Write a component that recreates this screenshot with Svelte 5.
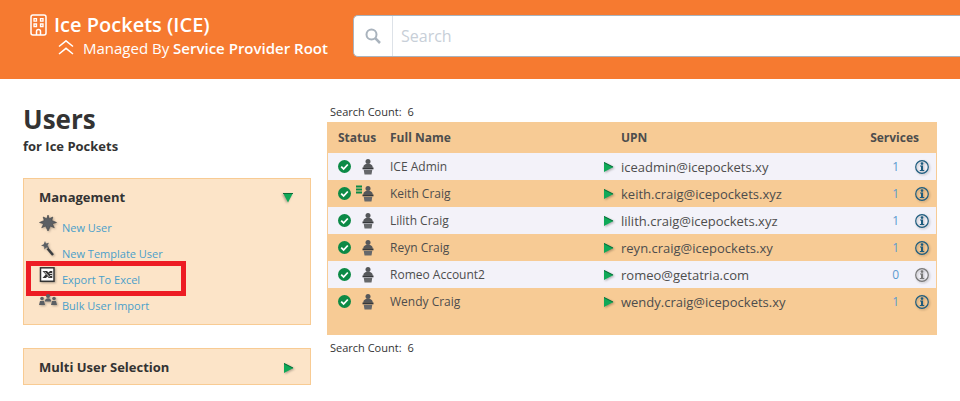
<script lang="ts">
  type User = {
    name: string
    upn: string
    services: number
    template?: boolean
  }

  const users: User[] = [
    { name: 'ICE Admin', upn: 'iceadmin@icepockets.xy', services: 1 },
    { name: 'Keith Craig', upn: 'keith.craig@icepockets.xyz', services: 1, template: true },
    { name: 'Lilith Craig', upn: 'lilith.craig@icepockets.xyz', services: 1 },
    { name: 'Reyn Craig', upn: 'reyn.craig@icepockets.xy', services: 1 },
    { name: 'Romeo Account2', upn: 'romeo@getatria.com', services: 0 },
    { name: 'Wendy Craig', upn: 'wendy.craig@icepockets.xy', services: 1 },
  ]

  const actions = [
    { icon: 'burst', label: 'New User' },
    { icon: 'wand', label: 'New Template User' },
    { icon: 'excel', label: 'Export To Excel', highlight: true },
    { icon: 'group', label: 'Bulk User Import' },
  ]

  let managementOpen = $state(true)
  let selectionOpen = $state(false)
  let query = $state('')
</script>

{#snippet arrow(open: boolean)}
  <svg class="arrow" class:open width="11" height="11" viewBox="0 0 11 11">
    <path d="M1 1L10.500 6L1 11z" fill="#0fa958" />
    <path d={open ? 'M1.5 1V11' : 'M1 1.5L10 6'} stroke="#0b6b3a" />
  </svg>
{/snippet}

<header class="topbar">
  <div class="brand">
    <div class="org">
      <svg width="17" height="22" viewBox="0 0 17 22" fill="none" stroke="#fff" stroke-width="1.5">
        <rect x="1" y="1" width="15" height="20" rx="2" />
        <path d="M6.500 21v-3.500a2 2 0 0 1 4 0V21" />
        <path d="M4 4.700h2.500v2.500H4zM10.500 4.700H13v2.500h-2.500zM4 10h2.500v2.500H4zM10.500 10H13v2.500h-2.500z" stroke-width="1.300" />
      </svg>
      <a href="#org">Ice Pockets (ICE)</a>
    </div>
    <div class="managed">
      <svg width="16" height="16" viewBox="0 0 16 16" fill="none" stroke="#fff" stroke-width="1.500">
        <path d="M1 6.500L8 .8L15 6.500M1 14L8 8.300L15 14" />
      </svg>
      <span>Managed By <strong>Service Provider Root</strong></span>
    </div>
  </div>
  <div class="search">
    <label for="search" aria-label="Search">
      <svg width="16" height="16" viewBox="0 0 16 16" fill="none" stroke="#a9b3bd" stroke-width="2">
        <circle cx="6.500" cy="6.500" r="5" />
        <path d="M10.200 10.200L15 15" stroke-width="2.500" />
      </svg>
    </label>
    <input id="search" type="text" placeholder="Search" bind:value={query} />
  </div>
</header>

<main>
  <aside>
    <h1>Users</h1>
    <p class="subtitle">for Ice Pockets</p>

    <section class="panel">
      <button type="button" aria-expanded={managementOpen} onclick={() => (managementOpen = !managementOpen)}>
        Management
        {@render arrow(managementOpen)}
      </button>
      {#if managementOpen}
        <ul>
          {#each actions as action}
            <li class:highlight={action.highlight}>
              <svg width="18" height="16" viewBox="0 0 18 16" fill="#5b5f64">
                {#if action.icon === 'burst'}
                  <path d="M9 0l1.300 3.700L13.800 2l-1 3.500L17.500 7.500l-4.200 1.300 2 3.900-3.900-1.600L9 16l-2.400-4.900-3.900 1.600 2-3.900L.5 7.500l4.700-2-1-3.500 3.500 1.700z" stroke="#3c3f43" stroke-width=".6" />
                {:else if action.icon === 'wand'}
                  <path d="M6 0l1 2.500 3-.8-1.500 2.500L10.200 7l-3-.6L5.500 8.500l-.4-2.900L2 4.600l2.700-1.400z" />
                  <path d="M8.500 7.500l5.500 6.500" stroke="#3b3d40" stroke-width="2.500" />
                {:else if action.icon === 'excel'}
                  <rect x="1.500" y="0.800" width="13.500" height="13.500" fill="#fff" stroke="#333" stroke-width="1.500" />
                  <path d="M3.500 4h4.500l1.500 1.500L11 4h2.300v7h-3.500L8.300 9.500 7 11H3.500l3.200-3.500z" fill="#333" />
                  <path d="M5.500 4.800l5.200 5.400M10.500 6.500h2.800M11 8.500h2.300" stroke="#fff" stroke-width=".8" />
                {:else}
                  <circle cx="9" cy="3" r="2" />
                  <path d="M5.800 8.500c0-4.500 6.400-4.500 6.400 0z" />
                  <circle cx="3" cy="5.500" r="1.800" />
                  <path d="M0 12l1-4h4l1 4z" />
                  <circle cx="15" cy="5.500" r="1.800" />
                  <path d="M12 12l1-4h4l1 4z" />
                {/if}
              </svg>
              <a href="#{action.icon}">{action.label}</a>
            </li>
          {/each}
        </ul>
      {/if}
    </section>

    <section class="panel">
      <button type="button" aria-expanded={selectionOpen} onclick={() => (selectionOpen = !selectionOpen)}>
        Multi User Selection
        {@render arrow(selectionOpen)}
      </button>
    </section>
  </aside>

  <div class="results">
    <p class="count">Search Count: <span>{users.length}</span></p>
    <table>
      <colgroup>
        <col class="col-status" />
        <col />
        <col class="col-arrow" />
        <col />
        <col class="col-services" />
        <col class="col-info" />
      </colgroup>
      <thead>
        <tr>
          <th class="status">Status</th>
          <th colspan="2">Full Name</th>
          <th>UPN</th>
          <th class="services" colspan="2">Services</th>
        </tr>
      </thead>
      <tbody>
        {#each users as user}
          <tr>
            <td class="status">
              <div class="icons">
                <svg width="13" height="13" viewBox="0 0 13 13">
                  <circle cx="6.500" cy="6.500" r="6.500" fill="#0c8a46" />
                  <path d="M3.200 6.700L5.600 9L9.800 4.500" fill="none" stroke="#fff" stroke-width="1.800" />
                </svg>
                <svg width="19" height="17" viewBox="0 0 19 17">
                  {#if user.template}
                    <path d="M0 1.500h6M0 4.500h6M0 7.500h6" stroke="#0c8a46" stroke-width="2" />
                  {/if}
                  <g fill="#55575a">
                    <circle cx="12" cy="3.500" r="2.500" />
                    <path d="M7.300 9.800c0-3 2-4 4.700-4s4.700 1 4.700 4z" />
                    <path d="M6.500 9.500h11v1.800h-11z" fill="#36383b" />
                    <path d="M7.700 11.700h8.600l-.8 4.800h-7z" fill="#66686b" />
                  </g>
                </svg>
              </div>
            </td>
            <td>{user.name}</td>
            <td>{@render arrow(false)}</td>
            <td class="upn">{user.upn}</td>
            <td class="number"><a href="#services">{user.services}</a></td>
            <td class="info">
              <button type="button" class:muted={user.services === 0} aria-label="Details for {user.name}">
                <svg width="14" height="14" viewBox="0 0 14 14">
                  <circle cx="7" cy="7" r="6.300" fill="none" stroke="currentColor" stroke-width="1.200" />
                  <circle cx="7" cy="3.600" r="1.300" fill="currentColor" />
                  <path d="M5 5.500h3v4.500h1.200v1H4.800v-1H6V6.500H5z" fill="currentColor" />
                </svg>
              </button>
            </td>
          </tr>
        {/each}
      </tbody>
      <tfoot>
        <tr><td colspan="6"></td></tr>
      </tfoot>
    </table>
    <p class="count below">Search Count: <span>{users.length}</span></p>
  </div>
</main>

<style>
  :global(body) {
    margin: 0;
    background: #fff;
    color: #333;
    font-family: 'Open Sans', 'Noto Sans', sans-serif;
    font-size: 12px;
    overflow-x: hidden;
  }

  svg {
    display: block;
    flex: none;
  }

  a {
    text-decoration: none;
  }

  button {
    border: 0;
    padding: 0;
    background: none;
    font: inherit;
    color: inherit;
    cursor: pointer;
  }

  .topbar {
    display: flex;
    height: 79px;
    background: #f67a30;
    color: #fff;
  }

  .brand {
    box-sizing: border-box;
    width: 353px;
    padding: 12px 0 0 30px;
  }

  .org {
    display: flex;
    align-items: center;
    gap: 7px;
    height: 25px;
    font-size: 20px;
    font-weight: 600;
  }

  .org a {
    color: inherit;
  }

  .managed {
    display: flex;
    align-items: center;
    gap: 9px;
    height: 22px;
    padding-left: 28px;
    font-size: 15px;
    white-space: nowrap;
  }

  .managed strong {
    font-weight: 600;
  }

  .search {
    box-sizing: border-box;
    display: flex;
    flex: 1;
    height: 42px;
    margin-top: 15px;
    border: 1px solid #a9b3bd;
    border-right: 0;
    border-radius: 5px 0 0 5px;
    background: #fff;
  }

  .search label {
    display: flex;
    align-items: center;
    padding: 0 11px;
    border-right: 1px solid #dde2e8;
  }

  .search input {
    flex: 1;
    min-width: 0;
    padding: 0 8px;
    border: 0;
    outline: 0;
    background: none;
    font: inherit;
    font-size: 16px;
  }

  .search input::placeholder {
    color: #c8cfd8;
  }

  main {
    display: flex;
    gap: 16px;
    padding: 0 23px;
  }

  aside {
    flex: none;
    width: 288px;
    padding-top: 22px;
  }

  h1 {
    margin: 0;
    font-size: 26px;
    line-height: 36px;
  }

  .subtitle {
    margin: 0 0 23px;
    font-size: 13px;
    font-weight: 700;
    line-height: 18px;
  }

  .panel {
    margin-bottom: 23px;
    padding: 9px 16px 5px 15px;
    border: 1px solid #f8cb93;
    background: #fce4c8;
  }

  .panel button {
    display: flex;
    align-items: center;
    justify-content: space-between;
    width: 100%;
    padding-bottom: 3px;
    font-size: 13px;
    font-weight: 700;
    line-height: 18px;
  }

  .arrow {
    filter: drop-shadow(1px 1px 1px rgba(0, 0, 0, 0.3));
  }

  .arrow.open {
    transform: rotate(90deg);
  }

  ul {
    margin: 6px 0 0;
    padding: 0;
    list-style: none;
  }

  li {
    position: relative;
    display: flex;
    gap: 5px;
    height: 26px;
    font-size: 11px;
    line-height: 26px;
  }

  li svg {
    filter: drop-shadow(1px 1px 1px rgba(0, 0, 0, 0.3));
  }

  li a {
    color: #4a9fca;
  }

  /* Red frame drawn over the row */
  .highlight::after {
    content: '';
    position: absolute;
    top: -6px;
    left: -13px;
    box-sizing: border-box;
    width: 160px;
    height: 35px;
    border: 5px solid #ed1c24;
    pointer-events: none;
  }

  .results {
    flex: 1;
    min-width: 0;
    padding-top: 23px;
  }

  .count {
    margin: 0;
    padding: 0 0 1px 3px;
    font-size: 11px;
    line-height: 19px;
  }

  .count.below {
    margin-top: 3px;
  }

  .count span {
    padding-left: 3px;
  }

  table {
    width: 100%;
    table-layout: fixed;
    border: 1px solid #f7cb95;
    border-top: 0;
    border-spacing: 0;
    border-collapse: separate;
    color: #4d4d4d;
  }

  .col-status {
    width: 62px;
  }

  .col-arrow {
    width: 18px;
  }

  .col-services {
    width: 65px;
  }

  .col-info {
    width: 37px;
  }

  th,
  td {
    height: 27px;
    padding: 0;
    line-height: 18px;
    text-align: left;
    white-space: nowrap;
  }

  th {
    height: 31px;
    font-weight: 700;
  }

  thead tr,
  tfoot tr,
  tbody tr:nth-child(even) {
    background: #f7cb95;
  }

  tbody tr {
    background: #f3f2f9;
  }

  tfoot td {
    height: 19px;
  }

  .status {
    padding-left: 10px;
  }

  .icons {
    display: flex;
    align-items: center;
    gap: 5px;
  }

  .upn {
    font-size: 13px;
  }

  th.services {
    padding-right: 17px;
    text-align: right;
  }

  .number {
    text-align: right;
  }

  .number a {
    color: #5b9bd0;
  }

  .info {
    padding-left: 16px;
  }

  .info button {
    display: block;
    color: #1c5b7e;
    filter: drop-shadow(1px 1px 1px rgba(0, 0, 0, 0.25));
  }

  .info button.muted {
    color: #777;
  }
</style>
